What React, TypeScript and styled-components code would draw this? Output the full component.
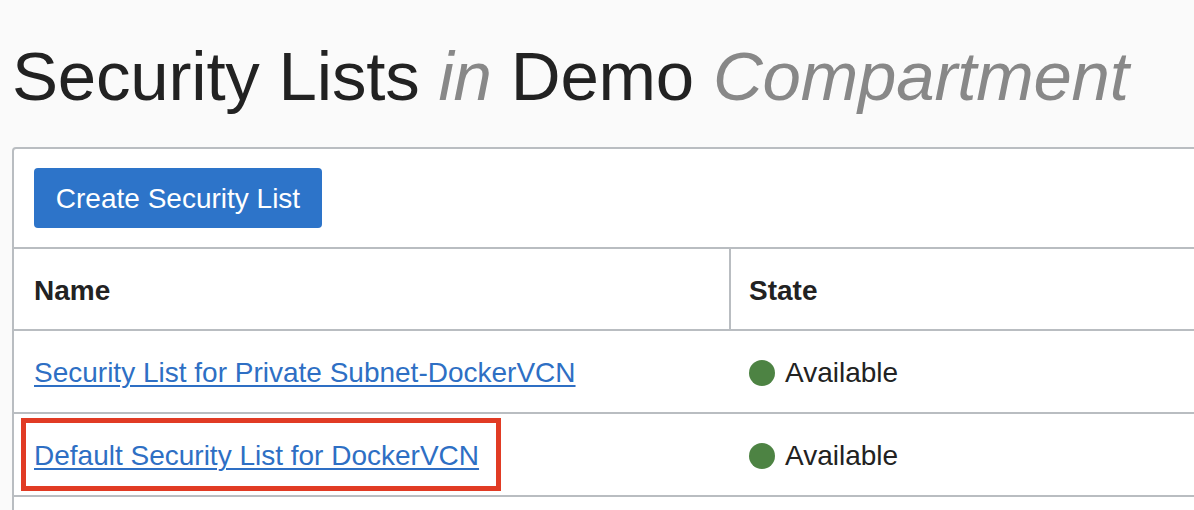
import React from "react";
import styled, { createGlobalStyle } from "styled-components";

const Global = createGlobalStyle`
  html, body { margin: 0; padding: 0; }
  body {
    background: #fafafa;
    font-family: "Liberation Sans", Arial, Helvetica, sans-serif;
    overflow: hidden;
    width: 1194px;
    height: 510px;
  }
`;

const Page = styled.div`
  padding: 0 0 0 12px;
`;

const Title = styled.h1`
  margin: 0;
  padding: 37px 0 0 0;
  height: 147px;
  box-sizing: border-box;
  font-size: 69px;
  font-weight: 400;
  line-height: 80px;
  color: #222;
  white-space: nowrap;
  letter-spacing: -0.2px;
`;

const Muted = styled.em`
  color: #888;
  font-style: italic;
`;

const Panel = styled.section`
  width: 1300px;
  padding-bottom: 60px;
  background: #fff;
  border: 2px solid #b9bdc1;
  border-radius: 4px 0 0 0;
`;

const Toolbar = styled.div`
  display: flex;
  padding: 19px 20px 19px;
  border-bottom: 2px solid #b9bdc1;
`;

const Button = styled.button`
  width: 288px;
  height: 60px;
  background: #2d74c9;
  color: #fff;
  border: none;
  border-radius: 4px;
  font-family: inherit;
  font-size: 28px;
  padding: 2px 0 0;
  display: flex;
  align-items: center;
  justify-content: center;
`;

const Table = styled.div`
  display: grid;
  grid-template-columns: 715px 1fr;
`;

const Cell = styled.div<{ $head?: boolean; $divider?: boolean }>`
  height: ${(p) => (p.$head ? "82px" : "83px")};
  box-sizing: border-box;
  display: flex;
  align-items: center;
  padding-top: 3px;
  padding-left: ${(p) => (p.$divider ? "18px" : "20px")};
  border-bottom: 2px solid #b9bdc1;
  border-left: ${(p) => (p.$divider ? "2px solid #b9bdc1" : "none")};
  font-size: 28px;
  font-weight: ${(p) => (p.$head ? 700 : 400)};
  color: #222;
  position: relative;
`;

const Link = styled.a`
  color: #2e6fc4;
  text-decoration: underline;
  text-decoration-thickness: 2px;
  text-underline-offset: 3px;
`;

const Highlight = styled.div`
  position: absolute;
  left: 7px;
  top: 4px;
  width: 480px;
  height: 73px;
  box-sizing: border-box;
  border: 5px solid #e13b24;
  pointer-events: none;
`;

const State = styled.span`
  display: inline-flex;
  align-items: center;
  gap: 10px;
`;

const Dot = styled.span`
  width: 26px;
  height: 26px;
  border-radius: 50%;
  background: #4d8343;
`;

const rows = [
  { name: "Security List for Private Subnet-DockerVCN", state: "Available", mark: false },
  { name: "Default Security List for DockerVCN", state: "Available", mark: true },
];

export default function App() {
  return (
    <>
      <Global />
      <Page>
        <Title>
          Security Lists <Muted>in</Muted> Demo <Muted>Compartment</Muted>
        </Title>
        <Panel>
          <Toolbar>
            <Button>Create Security List</Button>
          </Toolbar>
          <Table>
            <Cell $head>Name</Cell>
            <Cell $head $divider>State</Cell>
            {rows.map((r) => (
              <React.Fragment key={r.name}>
                <Cell>
                  <Link href="#">{r.name}</Link>
                  {r.mark && <Highlight />}
                </Cell>
                <Cell>
                  <State>
                    <Dot />
                    {r.state}
                  </State>
                </Cell>
              </React.Fragment>
            ))}
          </Table>
        </Panel>
      </Page>
    </>
  );
}
